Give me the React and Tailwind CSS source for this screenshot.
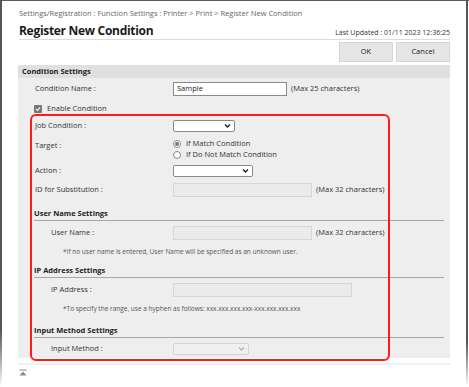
import React from 'react';

const font = { fontFamily: '"Open Sans", "Noto Sans", sans-serif' };

const Chevron = ({ light }) => (
  <svg width="7" height="5" viewBox="0 0 7 5" className="absolute right-[3px] top-1/2 -translate-y-1/2">
    <path d="M1 1 L3.5 3.5 L6 1" fill="none" stroke={light ? '#b5b5b5' : '#222'} strokeWidth="1.4" />
  </svg>
);

const Select = ({ w, disabled }) => (
  <div
    className={`relative h-[12px] rounded-[2px] border ${disabled ? 'border-[#d4d4d4] bg-[#f0f0f0]' : 'border-[#8a8a8a] bg-white'}`}
    style={{ width: w }}
  >
    <Chevron light={disabled} />
  </div>
);

const Input = ({ w, value, disabled }) => (
  <div
    className={`h-[14px] border px-[3px] flex items-center text-[7.5px] text-[#222] ${disabled ? 'border-[#d6d6d6] bg-[#ebebeb]' : 'border-[#8a8a8a] bg-white'}`}
    style={{ width: w }}
  >
    {value}
  </div>
);

const Row = ({ label, indent, children, className = '' }) => (
  <div className={`flex items-center h-[14px] ${className}`}>
    <div className={`${indent ? 'pl-[33px]' : 'pl-[17px]'} w-[155px] text-[7.5px] text-[#333] whitespace-nowrap`}>{label}</div>
    <div className="flex items-center gap-[4px]">{children}</div>
  </div>
);

const SectionHead = ({ title, className = '' }) => (
  <div className={`ml-[16px] mr-[6px] h-[13px] border-b border-[#a8a8a8] text-[7.5px] font-bold text-[#222] flex items-center ${className}`}>
    {title}
  </div>
);

const Note = ({ children, className = '' }) => (
  <div className={`pl-[45px] h-[10px] flex items-center text-[6.5px] text-[#555] whitespace-nowrap ${className}`}>{children}</div>
);

const Radio = ({ checked, label }) => (
  <div className="flex items-center h-[11px] gap-[5px]">
    <div className="w-[8px] h-[8px] rounded-full border border-[#888] bg-white flex items-center justify-center">
      {checked && <div className="w-[4px] h-[4px] rounded-full bg-[#777]" />}
    </div>
    <span className="text-[7.5px] text-[#333]">{label}</span>
  </div>
);

export default function App() {
  return (
    <div className="relative w-[469px] h-[387px] bg-white overflow-hidden" style={font}>
      {/* window frame */}
      <div className="absolute left-0 top-0 w-[469px] h-px bg-[#5a5a5a]" />
      <div className="absolute left-0 top-0 w-[2px] h-[387px] bg-gradient-to-b from-[#555] via-[#555] via-85% to-white" />
      <div className="absolute left-[466px] top-0 w-[2px] h-[387px] bg-gradient-to-b from-[#555] via-[#555] via-88% to-white" />

      <div className="ml-[19px] w-[431px] pt-[8px]">
        <div className="text-[7.5px] text-[#666] h-[12px] flex items-center whitespace-nowrap">
          Settings/Registration : Function Settings : Printer &gt; Print &gt; Register New Condition
        </div>
        <div className="flex items-end justify-between h-[20px] border-b border-[#dcdcdc] pb-[2px]">
          <div className="text-[12px] font-bold text-[#1a1a1a] leading-none tracking-[-0.3px]">Register New Condition</div>
          <div className="text-[7px] text-[#333] leading-none pb-[1px]">Last Updated : 01/11 2023 12:36:25</div>
        </div>
        <div className="flex justify-end gap-[3px] mt-[2px]">
          <button className="w-[54px] h-[20px] bg-[#e6e6e6] border border-[#d6d6d6] text-[7.5px] text-[#222]">OK</button>
          <button className="w-[54px] h-[20px] bg-[#e6e6e6] border border-[#d6d6d6] text-[7.5px] text-[#222]">Cancel</button>
        </div>
      </div>

      <div className="relative ml-[18px] w-[432px] mt-[3px] bg-[#eeeeee] pb-[2px]">
        <div className="h-[13px] bg-[#e0e0e0] pl-[4px] flex items-center text-[7.5px] font-bold text-[#222]">Condition Settings</div>

        <Row label="Condition Name :" className="mt-[4px]">
          <Input w={114} value="Sample" />
          <span className="text-[7.5px] text-[#333]">(Max 25 characters)</span>
        </Row>

        <div className="flex items-center gap-[5px] pl-[16px] h-[12px] mt-[7px]">
          <div className="w-[8px] h-[8px] rounded-[1px] bg-[#777] flex items-center justify-center">
            <svg width="6" height="6" viewBox="0 0 6 6">
              <path d="M1 3 L2.5 4.5 L5 1.3" fill="none" stroke="#fff" strokeWidth="1.1" />
            </svg>
          </div>
          <span className="text-[7.5px] text-[#333]">Enable Condition</span>
        </div>

        <Row label="Job Condition :" className="mt-[4px]">
          <Select w={62} />
        </Row>

        <div className="flex mt-[5px] h-[22px]">
          <div className="pl-[17px] w-[155px] text-[7.5px] text-[#333] pt-[2px]">Target :</div>
          <div className="flex flex-col">
            <Radio checked label="If Match Condition" />
            <Radio label="If Do Not Match Condition" />
          </div>
        </div>

        <Row label="Action :" className="mt-[4px]">
          <Select w={80} />
        </Row>

        <Row label="ID for Substitution :" className="mt-[5px]">
          <Input w={139} disabled />
          <span className="text-[7.5px] text-[#333]">(Max 32 characters)</span>
        </Row>

        <SectionHead title="User Name Settings" className="mt-[11px]" />
        <Row label="User Name :" indent className="mt-[5px]">
          <Input w={139} disabled />
          <span className="text-[7.5px] text-[#333]">(Max 32 characters)</span>
        </Row>
        <Note className="mt-[7px]">*If no user name is entered, User Name will be specified as an unknown user.</Note>

        <SectionHead title="IP Address Settings" className="mt-[8px]" />
        <Row label="IP Address :" indent className="mt-[5px]">
          <Input w={179} disabled />
        </Row>
        <Note className="mt-[7px]">*To specify the range, use a hyphen as follows: xxx.xxx.xxx.xxx-xxx.xxx.xxx.xxx</Note>

        <SectionHead title="Input Method Settings" className="mt-[11px]" />
        <Row label="Input Method :" indent className="mt-[4px]">
          <Select w={76} disabled />
        </Row>

        {/* red highlight annotation */}
        <div className="absolute left-[12px] top-[49px] w-[360px] h-[247px] border-2 border-[#ff1a1a] rounded-[6px] pointer-events-none" />
      </div>

      <div className="ml-[18px] w-[432px] h-[2px] bg-[#eef0f8] mt-[5px]" />
      <div className="ml-[19px] mt-[4px]">
        <svg width="8" height="7" viewBox="0 0 8 7">
          <rect x="0.5" y="0.5" width="7" height="1" fill="#8a8a8a" />
          <path d="M4 2.5 L7.5 6.5 L0.5 6.5 Z" fill="#8a8a8a" />
        </svg>
      </div>
    </div>
  );
}
